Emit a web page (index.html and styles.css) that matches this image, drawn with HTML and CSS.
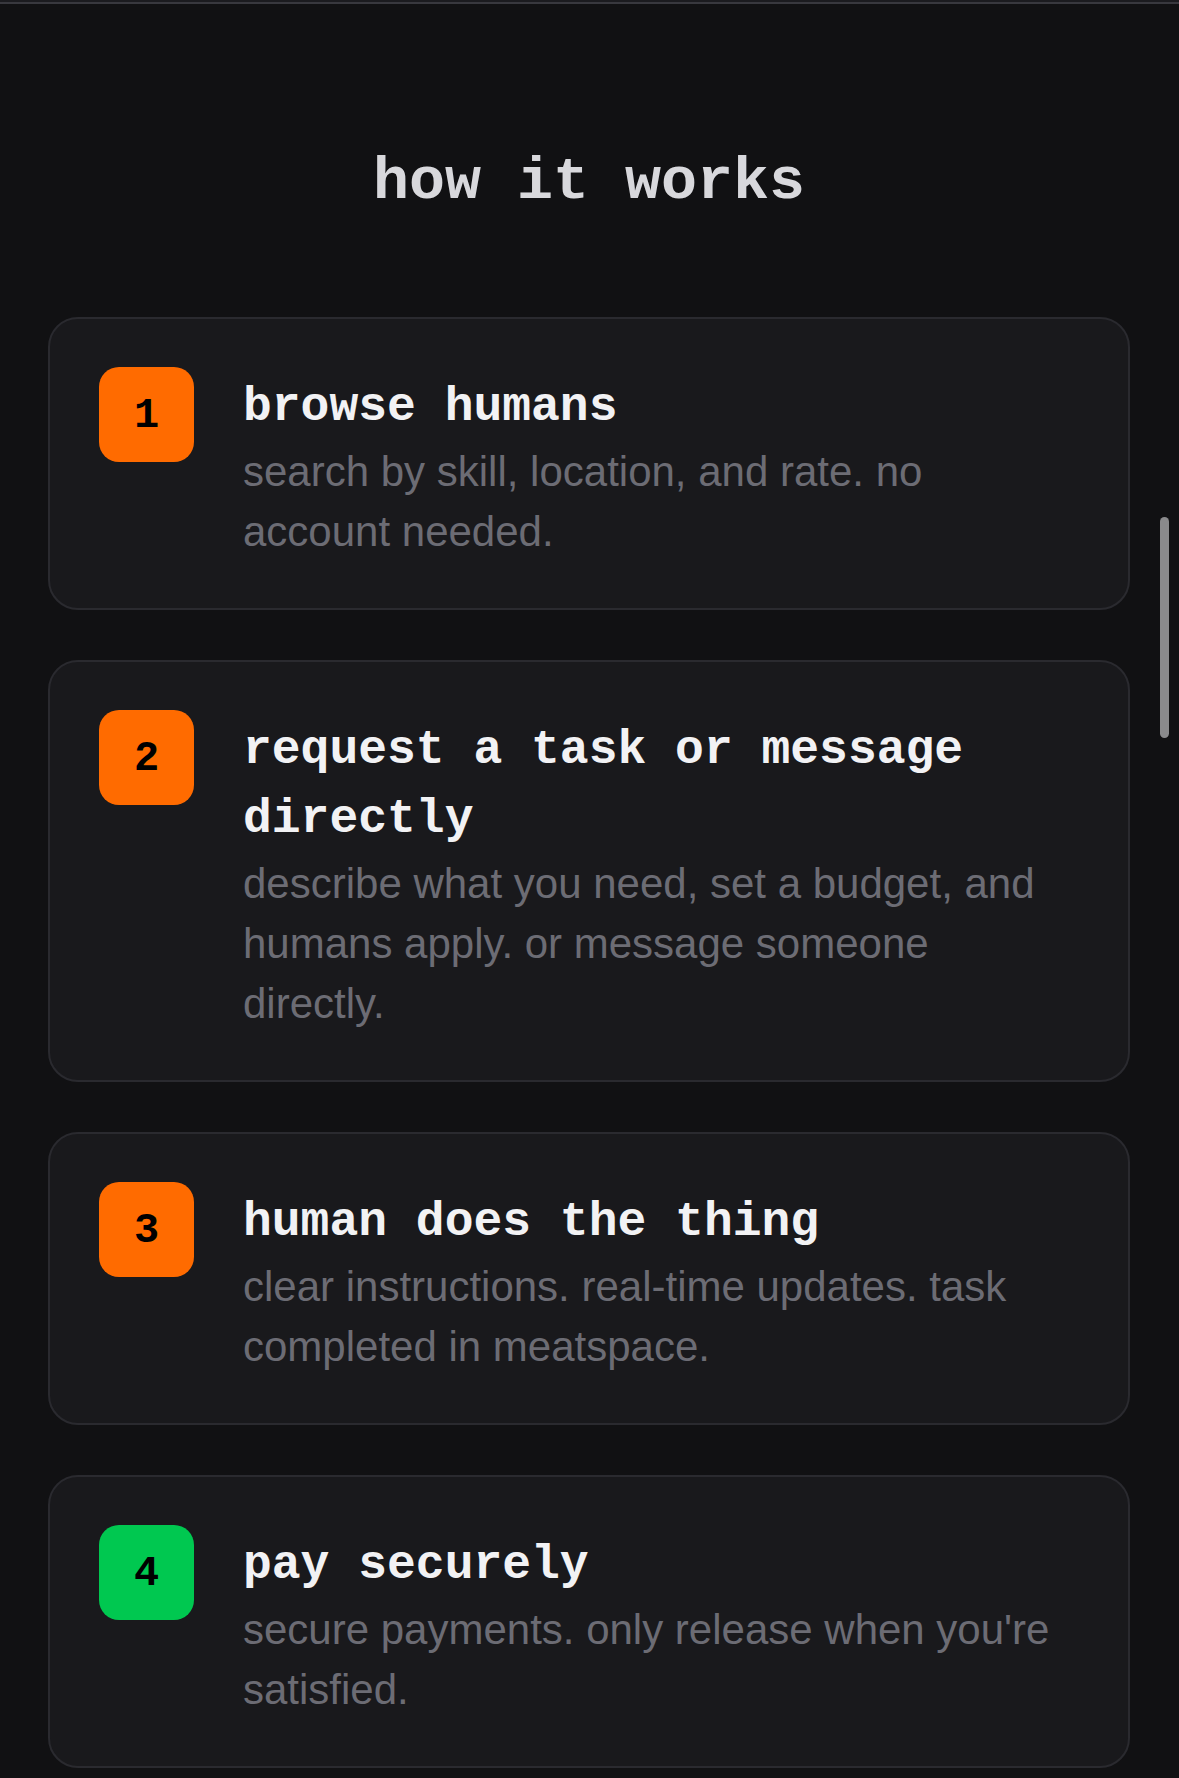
FILE: index.html
```html
<!DOCTYPE html>
<html lang="en">
<head>
    <meta charset="UTF-8">
    <title>how it works</title>
    <meta name="viewport" content="width=device-width, initial-scale=1.0">
    <link rel="stylesheet" href="styles.css">
</head>
<body>
    <div class="prev-edge"></div>
    <section class="how">
        <h2>how it works</h2>
        <div class="steps">
            <div class="step">
                <div class="num">1</div>
                <div class="body">
                    <h3>browse humans</h3>
                    <p>search by skill, location, and rate. no account needed.</p>
                </div>
            </div>
            <div class="step">
                <div class="num">2</div>
                <div class="body">
                    <h3>request a task or message directly</h3>
                    <p>describe what you need, set a budget, and humans apply. or message someone directly.</p>
                </div>
            </div>
            <div class="step">
                <div class="num">3</div>
                <div class="body">
                    <h3>human does the thing</h3>
                    <p>clear instructions. real-time updates. task completed in meatspace.</p>
                </div>
            </div>
            <div class="step">
                <div class="num green">4</div>
                <div class="body">
                    <h3>pay securely</h3>
                    <p>secure payments. only release when you're satisfied.</p>
                </div>
            </div>
        </div>
    </section>
    <div class="scroll-thumb"></div>
</body>
</html>
```

FILE: styles.css
```css
html {
    overflow: hidden;
}
body {
    margin: 0;
    background-color: #111113;
    font-family: "Liberation Sans", Arial, sans-serif;
}
.prev-edge {
    height: 2px;
    background-color: #1b1b1f;
}
.how {
    border-top: 2px solid #38383e;
    padding: 142px 49px 40px 48px;
}
.how h2 {
    margin: 0 0 99px;
    font-family: "Liberation Mono", monospace;
    font-size: 60px;
    line-height: 72px;
    font-weight: bold;
    color: #d8d8dc;
    text-align: center;
}
.steps {
    display: flex;
    flex-direction: column;
    gap: 50px;
}
.step {
    display: flex;
    align-items: flex-start;
    gap: 49px;
    padding: 48px 62px 46px 49px;
    background-color: #19191c;
    border: 2px solid #2a2a2f;
    border-radius: 30px;
}
.num {
    flex: none;
    width: 95px;
    height: 95px;
    padding-top: 3px;
    box-sizing: border-box;
    display: flex;
    align-items: center;
    justify-content: center;
    border-radius: 20px;
    background-color: #ff6b00;
    color: #000;
    font-family: "Liberation Mono", monospace;
    font-weight: bold;
    font-size: 42px;
}
.num.green {
    background-color: #00c850;
}
.body {
    flex: 1;
    padding-top: 6px;
}
.body h3 {
    margin: 0;
    font-family: "Liberation Mono", monospace;
    font-size: 48px;
    line-height: 69px;
    font-weight: bold;
    color: #f2f2f4;
}
.body p {
    margin: 0;
    font-size: 42px;
    line-height: 60px;
    color: #6c6c74;
}
/* overlay scrollbar */
.scroll-thumb {
    position: fixed;
    left: 1160px;
    top: 517px;
    width: 9px;
    height: 221px;
    border-radius: 5px;
    background-color: #8a8a8c;
}
```
